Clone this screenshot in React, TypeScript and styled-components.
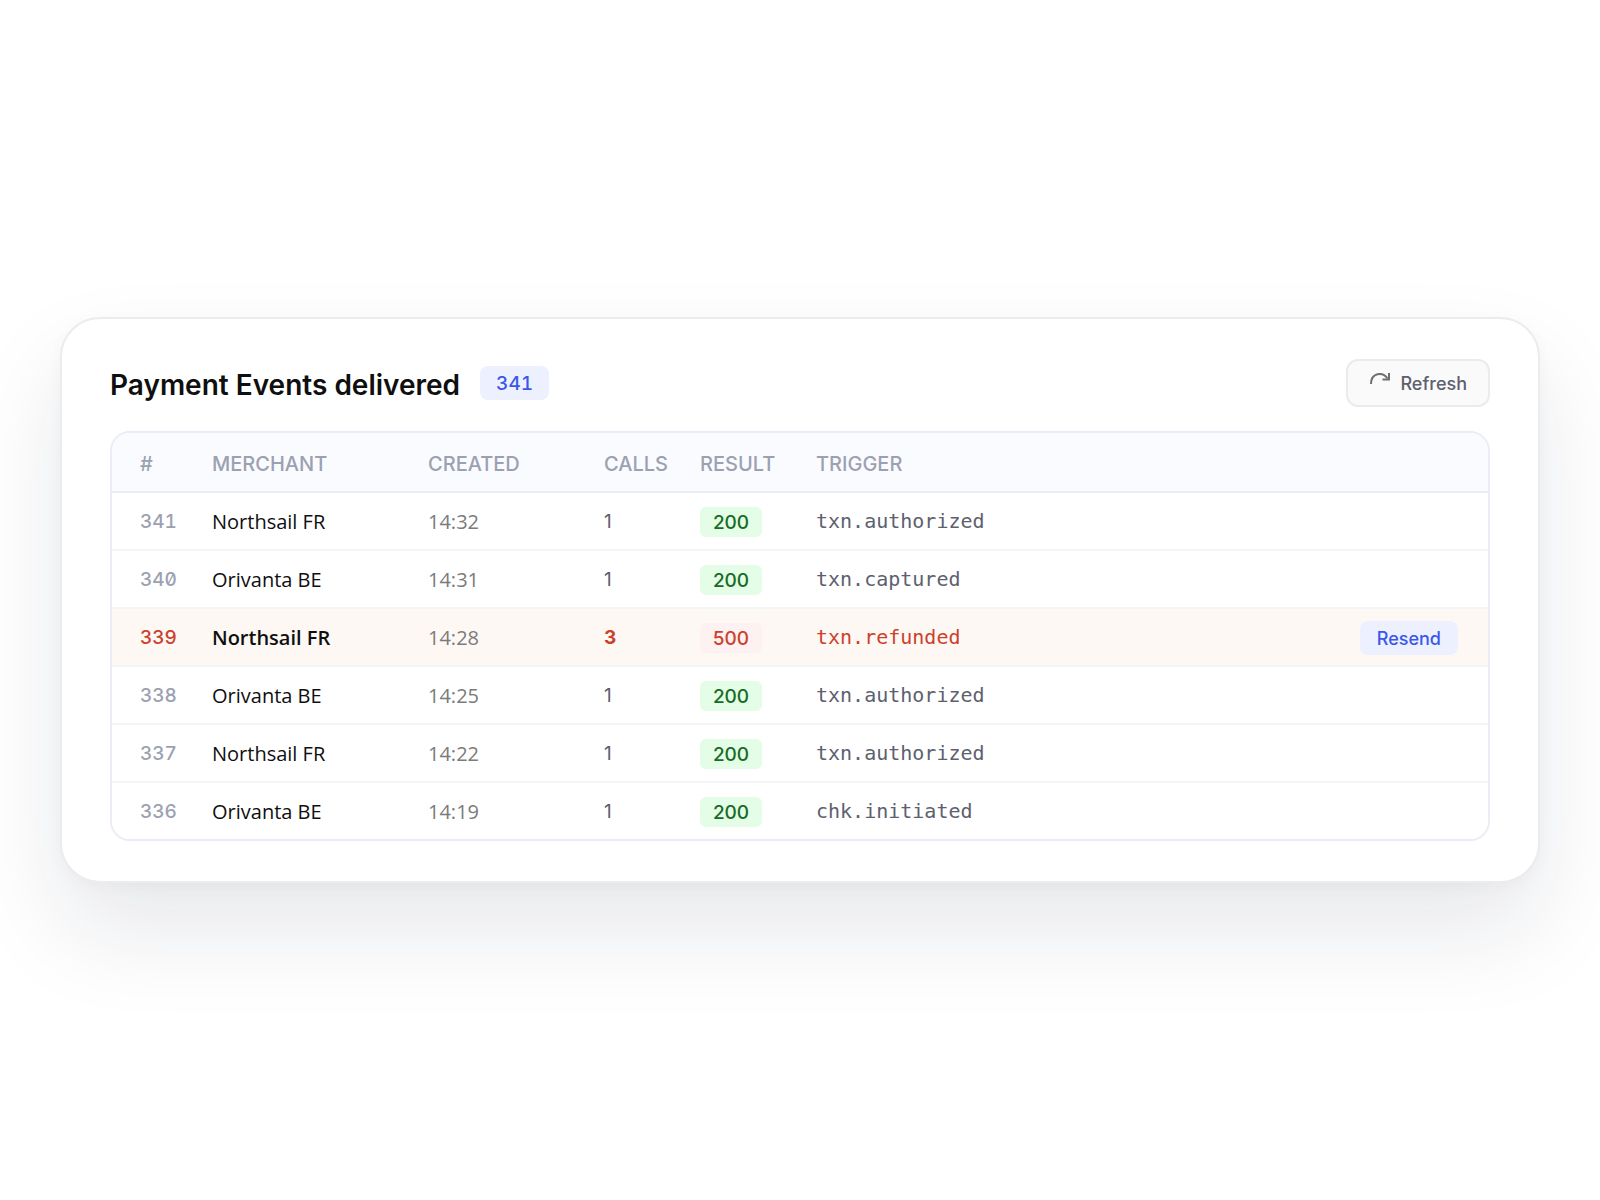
import React from "react";
import styled, { createGlobalStyle } from "styled-components";

const sans = `Inter, Roboto, "Liberation Sans", sans-serif`;
const body = `"Open Sans", "Noto Sans", sans-serif`;
const mono = `"DejaVu Sans Mono", "Liberation Mono", monospace`;

const GlobalStyle = createGlobalStyle`
  *, *::before, *::after { box-sizing: border-box; }
  body { margin: 0; background: #fff; font-family: ${sans}; color: #0f0f10; -webkit-font-smoothing: antialiased; }
  button { font-family: inherit; cursor: pointer; }
`;

const Page = styled.main`
  min-height: 100vh;
  padding: 60px;
  display: flex;
  align-items: center;
`;

const Card = styled.section`
  flex: 1;
  min-width: 0;
  padding: 40px 48px;
  background: #fff;
  border: 2px solid #ececee;
  border-radius: 40px;
  box-shadow: 0 48px 96px rgba(20, 28, 60, 0.1), 0 4px 16px rgba(0, 0, 0, 0.03);
`;

const Header = styled.header`
  display: flex;
  align-items: center;
  gap: 20px;
  margin-bottom: 24px;
`;

const Title = styled.h1`
  margin: 0;
  padding-top: 4px;
  font-size: 28px;
  line-height: 40px;
  font-weight: 600;
`;

const Count = styled.span`
  padding: 2px 16px 0;
  border-radius: 8px;
  background: #edf1ff;
  color: #3b57ea;
  font: 500 19px/32px ${sans};
  font-feature-settings: "tnum", "zero";
`;

const RefreshButton = styled.button`
  margin-left: auto;
  height: 48px;
  padding: 0 21px 0 20px;
  display: flex;
  align-items: center;
  gap: 10px;
  border: 2px solid #ebebec;
  border-radius: 12px;
  background: #fafafa;
  color: #5d606e;
  font-size: 18px;
  font-weight: 500;
`;

const TableFrame = styled.div`
  border: 2px solid #eaedf5;
  border-radius: 20px;
  overflow: hidden;
`;

const Table = styled.table`
  width: 100%;
  table-layout: fixed;
  border-collapse: separate;
  border-spacing: 0;
  text-align: left;
`;

const Col = styled.col<{ $width?: number }>`
  width: ${(p) => (p.$width ? `${p.$width}px` : "auto")};
`;

const HeadCell = styled.th`
  height: 60px;
  padding: 4px 0 0 28px;
  background: #fafbff;
  border-bottom: 2px solid #eaedf5;
  color: #9ca1b2;
  font-size: 20px;
  font-weight: 500;
  text-transform: uppercase;
`;

const Row = styled.tr<{ $failed: boolean }>`
  height: 58px;
  background: ${(p) => (p.$failed ? "#fef8f4" : "#fff")};

  &:last-child {
    height: 56px;
  }

  &:last-child > td {
    border-bottom: 0;
  }
`;

const Cell = styled.td`
  padding: 2px 0 0 28px;
  border-bottom: 2px solid #f3f4f6;
  font-size: 20px;
  line-height: 28px;
  white-space: nowrap;
`;

const IdCell = styled(Cell)<{ $failed: boolean }>`
  color: ${(p) => (p.$failed ? "#cb412b" : "#9ca1b2")};
  font: 500 19px/28px ${sans};
  font-feature-settings: "tnum", "zero";
`;

const MerchantCell = styled(Cell)<{ $failed: boolean }>`
  font-family: ${body};
  font-weight: ${(p) => (p.$failed ? 600 : 400)};
`;

const TimeCell = styled(Cell)`
  color: #7b7b7b;
  font-family: ${body};
`;

const CallsCell = styled(Cell)<{ $failed: boolean }>`
  color: ${(p) => (p.$failed ? "#cb412b" : "#5d606e")};
  font-size: 19px;
  font-weight: ${(p) => (p.$failed ? 700 : 400)};
`;

const TriggerCell = styled(Cell)<{ $failed: boolean }>`
  padding-top: 0;
  color: ${(p) => (p.$failed ? "#cb412b" : "#5d606e")};
  font-family: ${mono};
`;

const ActionCell = styled(Cell)`
  padding-right: 30px;
  text-align: right;
`;

const Status = styled.span<{ $failed: boolean }>`
  display: block;
  width: 62px;
  padding-top: 2px;
  border-radius: 6px;
  text-align: center;
  background: ${(p) => (p.$failed ? "#fef1f2" : "#e3fde6")};
  color: ${(p) => (p.$failed ? "#cb412b" : "#176b25")};
  font: 500 19px/28px ${sans};
`;

const ResendButton = styled.button`
  height: 34px;
  padding: 0 17px;
  border: 0;
  border-radius: 8px;
  background: #edf1ff;
  color: #3b57ea;
  font-size: 18px;
  font-weight: 500;
  vertical-align: middle;
`;

function RefreshIcon() {
  return (
    <svg width="22" height="22" viewBox="0 0 22 22" fill="none" stroke="#6f6f6f" strokeWidth="2" aria-hidden="true">
      <path d="M3 12C3 1 14.5 -1 19.5 6.5" />
      <path d="M21 1v6.5h-6.5" />
    </svg>
  );
}

const events = [
  { id: 341, merchant: "Northsail FR", created: "14:32", calls: 1, result: 200, trigger: "txn.authorized" },
  { id: 340, merchant: "Orivanta BE", created: "14:31", calls: 1, result: 200, trigger: "txn.captured" },
  { id: 339, merchant: "Northsail FR", created: "14:28", calls: 3, result: 500, trigger: "txn.refunded" },
  { id: 338, merchant: "Orivanta BE", created: "14:25", calls: 1, result: 200, trigger: "txn.authorized" },
  { id: 337, merchant: "Northsail FR", created: "14:22", calls: 1, result: 200, trigger: "txn.authorized" },
  { id: 336, merchant: "Orivanta BE", created: "14:19", calls: 1, result: 200, trigger: "chk.initiated" },
];

export default function App() {
  return (
    <Page>
      <GlobalStyle />
      <Card>
        <Header>
          <Title>Payment Events delivered</Title>
          <Count>341</Count>
          <RefreshButton type="button">
            <RefreshIcon />
            Refresh
          </RefreshButton>
        </Header>
        <TableFrame>
          <Table>
            <colgroup>
              <Col $width={72} />
              <Col $width={216} />
              <Col $width={176} />
              <Col $width={96} />
              <Col $width={116} />
              <Col />
              <Col $width={160} />
            </colgroup>
            <thead>
              <tr>
                <HeadCell scope="col">#</HeadCell>
                <HeadCell scope="col">Merchant</HeadCell>
                <HeadCell scope="col">Created</HeadCell>
                <HeadCell scope="col">Calls</HeadCell>
                <HeadCell scope="col">Result</HeadCell>
                <HeadCell scope="col">Trigger</HeadCell>
                <HeadCell as="td" />
              </tr>
            </thead>
            <tbody>
              {events.map((event) => {
                const failed = event.result >= 400;
                return (
                  <Row key={event.id} $failed={failed}>
                    <IdCell $failed={failed}>{event.id}</IdCell>
                    <MerchantCell $failed={failed}>{event.merchant}</MerchantCell>
                    <TimeCell>{event.created}</TimeCell>
                    <CallsCell $failed={failed}>{event.calls}</CallsCell>
                    <Cell>
                      <Status $failed={failed}>{event.result}</Status>
                    </Cell>
                    <TriggerCell $failed={failed}>{event.trigger}</TriggerCell>
                    <ActionCell>{failed && <ResendButton type="button">Resend</ResendButton>}</ActionCell>
                  </Row>
                );
              })}
            </tbody>
          </Table>
        </TableFrame>
      </Card>
    </Page>
  );
}
